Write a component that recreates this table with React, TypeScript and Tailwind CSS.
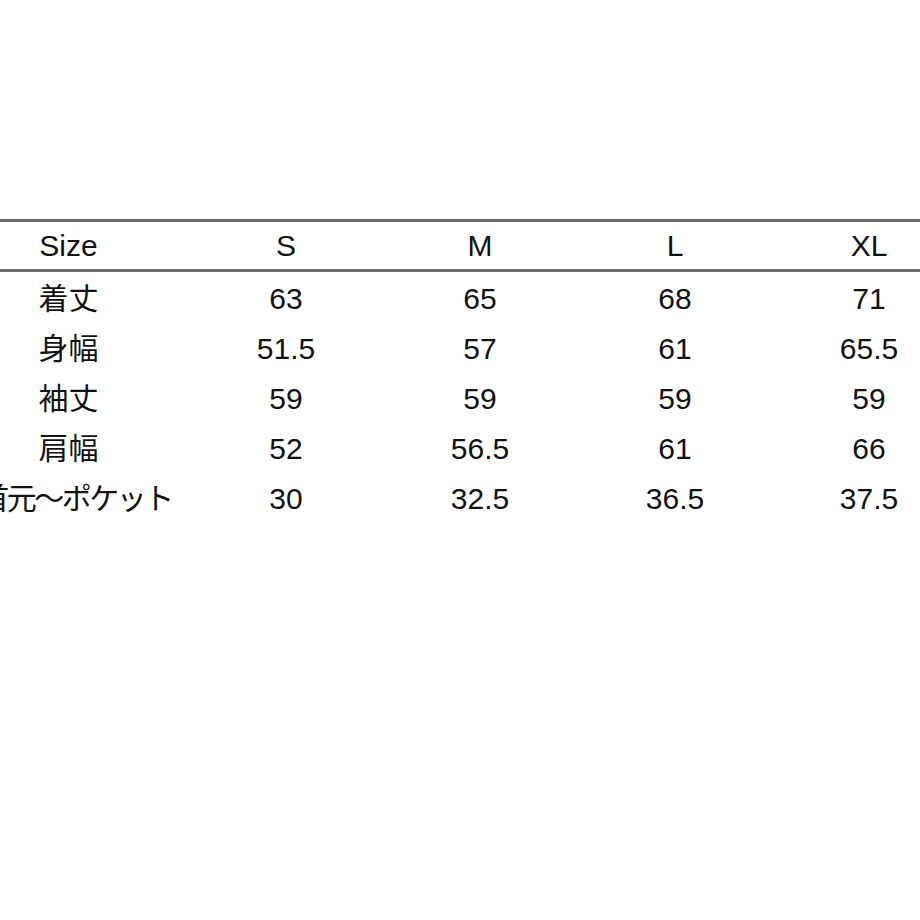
import React from "react";

const headers = ["Size", "S", "M", "L", "XL"];

const rows = [
  ["着丈", "63", "65", "68", "71"],
  ["身幅", "51.5", "57", "61", "65.5"],
  ["袖丈", "59", "59", "59", "59"],
  ["肩幅", "52", "56.5", "61", "66"],
  ["首元〜ポケット", "30", "32.5", "36.5", "37.5"],
];

// column centres at 69 / 286 / 480 / 675 / 869
const cols = "grid grid-cols-[217px_218px_170px_220px_168px] ml-[-40px] w-[993px]";

const App = () => {
  return (
    <div
      className="w-[920px] h-[920px] bg-white overflow-hidden pt-[219px] text-[#111] text-[30px]"
      style={{ fontFamily: '"Liberation Sans", Arial, "Noto Sans CJK JP", sans-serif' }}
    >
      {/* header */}
      <div className="border-t-[3px] border-b-[3px] border-[#6e6e6e] w-[920px]">
        <div className={`${cols} h-[47px] items-center`}>
          {headers.map((h, i) => (
            <div key={i} className="text-center leading-none whitespace-nowrap">
              {h}
            </div>
          ))}
        </div>
      </div>

      {/* body */}
      <div className="pt-[2px]">
        {rows.map((row, r) => (
          <div key={r} className={`${cols} h-[50px] items-center`}>
            {row.map((cell, i) => (
              <div
                key={i}
                className={
                  i === 0 && cell.length > 4
                    ? "text-center leading-none whitespace-nowrap tracking-[-2.5px] pl-[14px]"
                    : "text-center leading-none whitespace-nowrap"
                }
              >
                {cell}
              </div>
            ))}
          </div>
        ))}
      </div>
    </div>
  );
};

export default App;
